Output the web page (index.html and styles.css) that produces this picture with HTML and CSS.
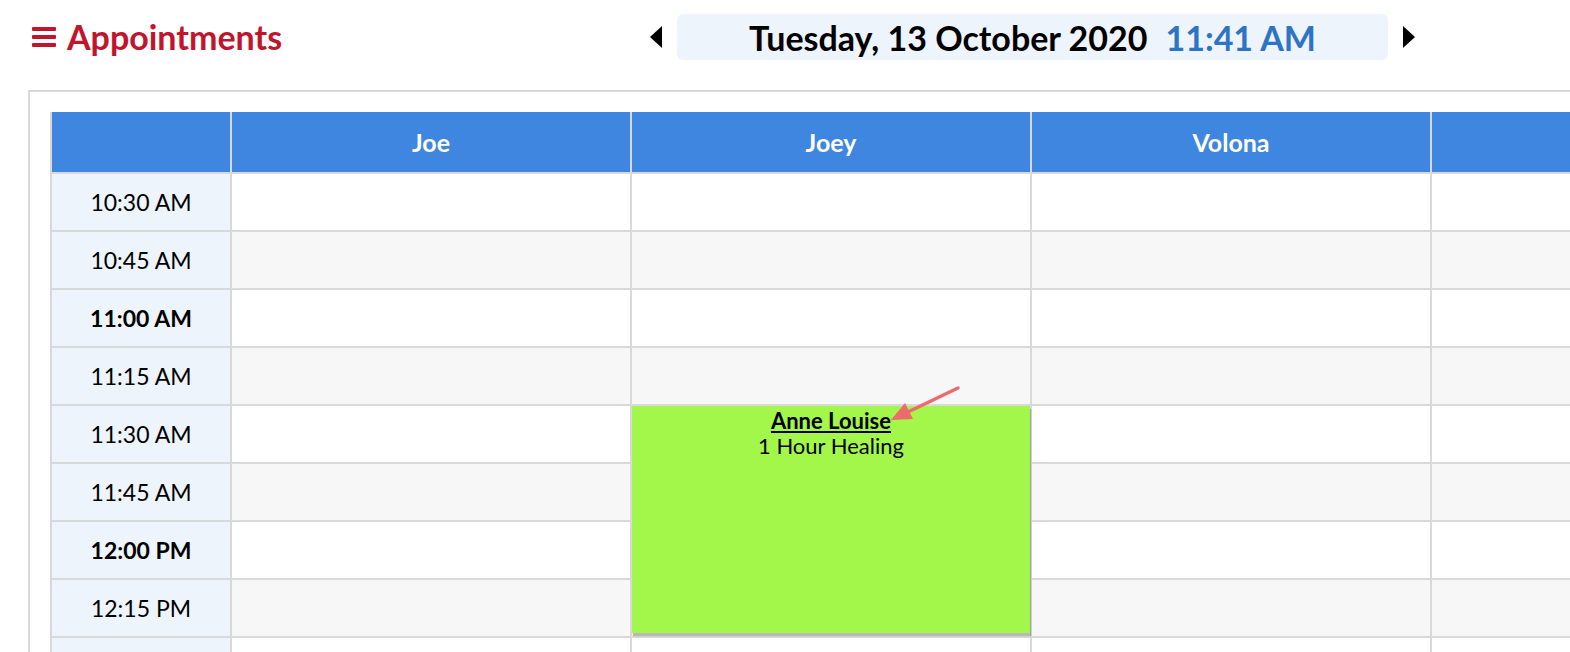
FILE: index.html
```html
<!DOCTYPE html>
<html lang="en">
    <head>
        <meta charset="UTF-8" />
        <meta name="viewport" content="width=device-width, initial-scale=1.0" />
        <title>Appointments</title>

        <link rel="stylesheet" href="styles.css">
    </head>
    <body>
        <div class="topbar">
            <div class="brand">
                <svg class="menu-icon" width="24" height="20" viewBox="0 0 24 20">
                    <rect x="0" y="0" width="24" height="4" rx="1" />
                    <rect x="0" y="8" width="24" height="4" rx="1" />
                    <rect x="0" y="16" width="24" height="4" rx="1" />
                </svg>
                <h1>Appointments</h1>
            </div>
            <div class="date-nav">
                <span class="nav-arrow left"></span>
                <div class="date-box">
                    <span class="date">Tuesday, 13 October 2020</span>
                    <span class="clock">11:41 AM</span>
                </div>
                <span class="nav-arrow right"></span>
            </div>
        </div>

        <div class="panel">
            <div class="schedule">
                <div class="row head">
                    <div class="cell corner"></div>
                    <div class="cell name">Joe</div>
                    <div class="cell name">Joey</div>
                    <div class="cell name">Volona</div>
                    <div class="cell name"></div>
                </div>

                <div class="row">
                    <div class="cell time">10:30 AM</div>
                    <div class="cell slot"></div>
                    <div class="cell slot"></div>
                    <div class="cell slot"></div>
                    <div class="cell slot"></div>
                </div>
                <div class="row alt">
                    <div class="cell time">10:45 AM</div>
                    <div class="cell slot"></div>
                    <div class="cell slot"></div>
                    <div class="cell slot"></div>
                    <div class="cell slot"></div>
                </div>
                <div class="row">
                    <div class="cell time hour">11:00 AM</div>
                    <div class="cell slot"></div>
                    <div class="cell slot"></div>
                    <div class="cell slot"></div>
                    <div class="cell slot"></div>
                </div>
                <div class="row alt">
                    <div class="cell time">11:15 AM</div>
                    <div class="cell slot"></div>
                    <div class="cell slot"></div>
                    <div class="cell slot"></div>
                    <div class="cell slot"></div>
                </div>
                <div class="row">
                    <div class="cell time">11:30 AM</div>
                    <div class="cell slot"></div>
                    <div class="cell slot booked">
                        <div class="appointment">
                            <a class="client" href="#">Anne Louise</a>
                            <div class="service">1 Hour Healing</div>
                        </div>
                        <svg class="pointer" width="80" height="50" viewBox="0 0 80 50">
                            <line x1="76" y1="6" x2="26" y2="30" />
                            <polygon points="9,38 23,21 31,37" />
                        </svg>
                    </div>
                    <div class="cell slot"></div>
                    <div class="cell slot"></div>
                </div>
                <div class="row alt">
                    <div class="cell time">11:45 AM</div>
                    <div class="cell slot"></div>
                    <div class="cell slot"></div>
                    <div class="cell slot"></div>
                    <div class="cell slot"></div>
                </div>
                <div class="row">
                    <div class="cell time hour">12:00 PM</div>
                    <div class="cell slot"></div>
                    <div class="cell slot"></div>
                    <div class="cell slot"></div>
                    <div class="cell slot"></div>
                </div>
                <div class="row alt">
                    <div class="cell time">12:15 PM</div>
                    <div class="cell slot"></div>
                    <div class="cell slot"></div>
                    <div class="cell slot"></div>
                    <div class="cell slot"></div>
                </div>
                <!-- next slot row, only its top edge is on screen -->
                <div class="row">
                    <div class="cell time"></div>
                    <div class="cell slot"></div>
                    <div class="cell slot"></div>
                    <div class="cell slot"></div>
                    <div class="cell slot"></div>
                </div>
            </div>
        </div>
    </body>
</html>
```

FILE: styles.css
```css
html,
body {
    overflow: hidden;
}

body {
    font-family: Lato, "Open Sans", sans-serif;
    background-color: #ffffff;
    color: #000000;
    margin: 0;
}

.topbar {
    display: flex;
    align-items: center;
    padding: 14px 0 0 32px;
    height: 46px;
}

.brand {
    display: flex;
    align-items: center;
    width: 618px;
    color: #c0152c;
}

.menu-icon {
    fill: #c0152c;
    margin-right: 11px;
}

.brand h1 {
    margin: 0;
    font-size: 34px;
    font-weight: 700;
    line-height: 40px;
}

.date-nav {
    display: flex;
    align-items: center;
}

.nav-arrow {
    width: 0;
    height: 0;
    border-top: 11px solid transparent;
    border-bottom: 11px solid transparent;
}

.nav-arrow.left {
    border-right: 12px solid #000000;
    margin-right: 15px;
}

.nav-arrow.right {
    border-left: 12px solid #000000;
    margin-left: 15px;
}

.date-box {
    width: 711px;
    height: 46px;
    background-color: #edf4fb;
    border-radius: 6px;
    display: flex;
    align-items: center;
    justify-content: center;
    font-size: 34px;
    font-weight: 700;
}

.clock {
    color: #2e73c4;
    margin-left: 18px;
}

.panel {
    margin: 30px 0 0 28px;
    border-left: 2px solid #d9d9d9;
    border-top: 2px solid #d9d9d9;
    padding: 20px;
}

.schedule {
    display: grid;
    grid-template-columns: 178px repeat(4, 398px);
    grid-template-rows: 60px;
    grid-auto-rows: 56px;
    gap: 2px;
    padding-left: 2px;
    width: max-content;
    background-color: #d9d9d9;
}

.row {
    display: contents;
}

.cell {
    display: flex;
    align-items: center;
    justify-content: center;
    background-color: #ffffff;
}

.head .cell {
    background-color: #3e86e0;
    color: #ffffff;
    font-size: 25px;
    font-weight: 700;
}

.alt .slot {
    background-color: #f7f7f7;
}

.time,
.alt .time {
    background-color: #edf4fb;
    font-size: 23px;
}

.time.hour {
    font-weight: 700;
}

.booked {
    position: relative;
    z-index: 2;
}

.appointment {
    position: absolute;
    top: 0;
    left: 0;
    right: 0;
    height: 227px;
    background-color: #a3f74b;
    box-shadow: 1px 3px 1px rgba(0, 0, 0, 0.25);
    text-align: center;
    font-size: 22px;
    line-height: 25px;
    padding-top: 2px;
    box-sizing: border-box;
}

.client {
    color: #000000;
    font-weight: 700;
}

.pointer {
    position: absolute;
    top: -24px;
    left: 250px;
    overflow: visible;
}

.pointer line {
    stroke: #ee6a6e;
    stroke-width: 3.5;
    stroke-linecap: round;
}

.pointer polygon {
    fill: #ee6a6e;
}
```
